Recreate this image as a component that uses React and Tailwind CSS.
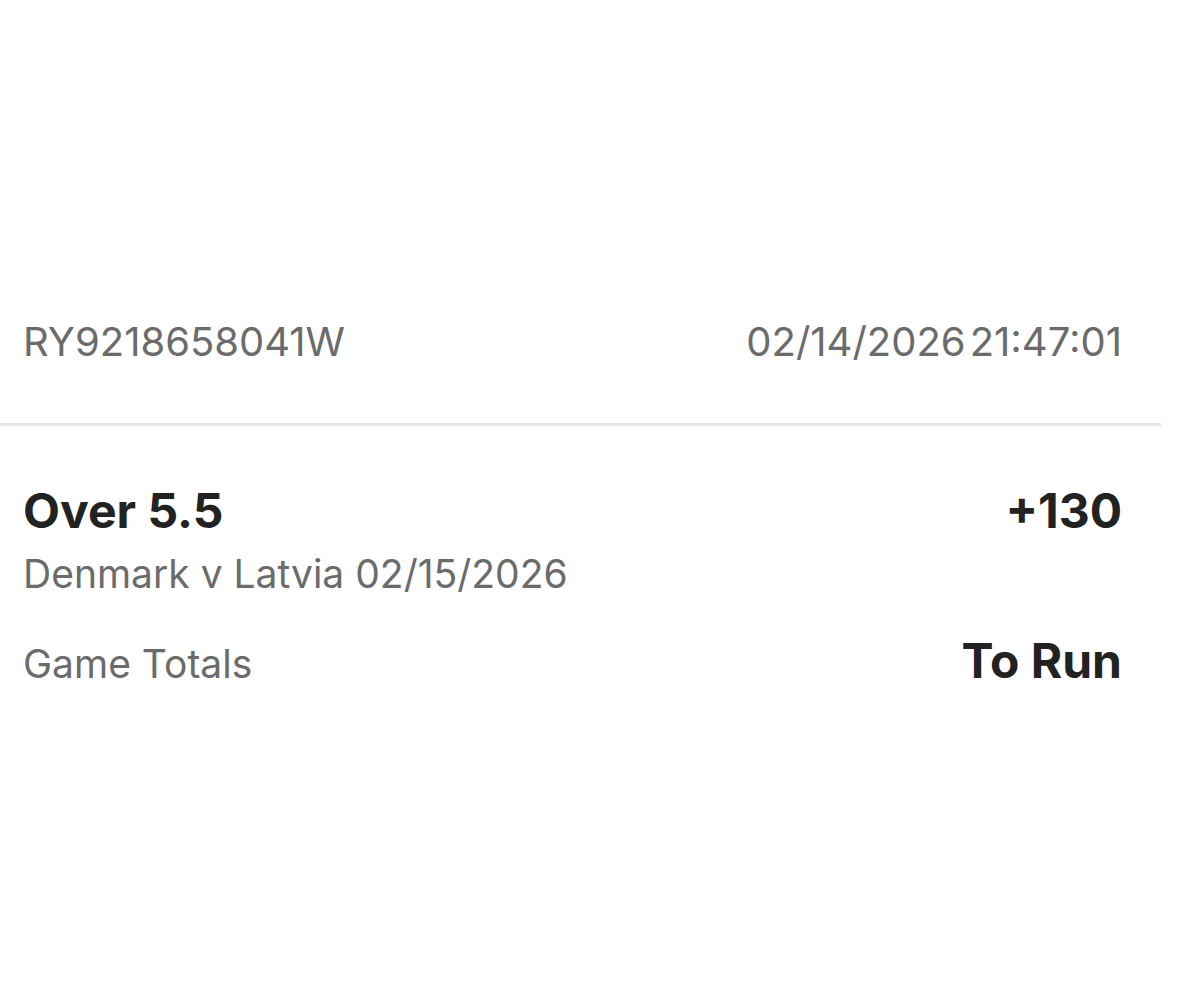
export default function App() {
  return (
    <div className="w-[1179px] h-[1002px] bg-white overflow-hidden" style={{ fontFamily: "Inter, 'Noto Sans', sans-serif" }}>
      <div className="w-[1161px]">
        <div className="pt-[322px] pl-[23px] pr-[39px] flex justify-between text-[40px] leading-[40px] text-[#6b6b6b]">
          <span>RY9218658041W</span>
          <span className="flex gap-[4px]">
            <span>02/14/2026</span>
            <span>21:47:01</span>
          </span>
        </div>
        <div className="mt-[61px] h-[3px] bg-[#e8e8e8]" />
        <div className="pl-[23px] pr-[39px]">
          <div className="mt-[61px] flex justify-between text-[48px] leading-[48px] font-bold text-[#222222]">
            <span>Over 5.5</span>
            <span>+130</span>
          </div>
          <div className="mt-[19px] text-[39px] leading-[39px] text-[#6b6b6b]">
            Denmark v Latvia 02/15/2026
          </div>
          <div className="mt-[44px] flex justify-between items-baseline">
            <span className="text-[39px] leading-[39px] text-[#6b6b6b]">Game Totals</span>
            <span className="text-[48px] leading-[48px] font-bold text-[#222222]">To Run</span>
          </div>
        </div>
      </div>
    </div>
  );
}
